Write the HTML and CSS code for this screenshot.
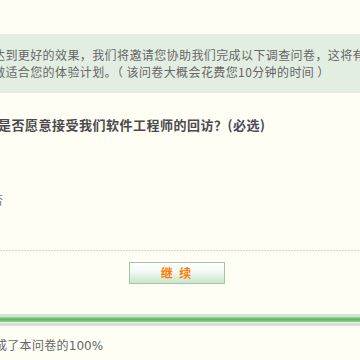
FILE: index.html
```html
<!DOCTYPE html>
<html lang="zh-CN">
<head>
  <meta charset="UTF-8">
  <title>调查问卷</title>
  <link rel="stylesheet" href="styles.css">
</head>
<body>

<div class="page">
  <div class="intro">
    <p class="intro-line">达到更好的效果，我们将邀请您协助我们完成以下调查问卷，这将有助于我们</p>
    <p class="intro-line">做适合您的体验计划。（ 该问卷大概会花费您10分钟的时间 ）</p>
  </div>

  <div class="question">
    <h3 class="question-title">是否愿意接受我们软件工程师的回访？<span class="required">(必选)</span></h3>
    <div class="options">
      <label class="option">否</label>
    </div>
  </div>

  <div class="actions">
    <button class="next-btn">继 续</button>
  </div>

  <div class="progress">
    <div class="progress-bar"><div class="progress-fill" style="width: 100%"></div></div>
    <p class="progress-text">成了本问卷的<span class="num">100%</span></p>
  </div>
</div>

</body>
</html>
```

FILE: styles.css
```css
body {
  margin: 0;
  padding: 0;
  background: #fefef5;
  color: #666;
  font-family: "Noto Sans CJK SC", "Noto Sans", sans-serif;
  font-size: 12px;
  overflow: hidden;
  width: 360px;
  height: 360px;
}
.page {
  padding-top: 34px;
}
.intro {
  background: #e3eee2;
  padding: 12px 0 13px;
  overflow: hidden;
}
.intro-line {
  margin: 0 0 0 -7px;
  line-height: 17px;
  white-space: pre;
  letter-spacing: 0.4px;
  color: #666;
}
.question {
  margin-top: 22px;
  overflow: hidden;
}
.question-title {
  margin: 0 0 0 -2px;
  font-size: 13px;
  line-height: 20px;
  font-weight: bold;
  color: #4a4a4a;
  letter-spacing: 0.5px;
  white-space: nowrap;
}
.required {
  color: #4a4a5a;
}
.options {
  padding-top: 55px;
  height: 59px;
}
.option {
  display: block;
  margin-left: -9px;
  line-height: 20px;
  color: #777;
}
.actions {
  border-top: 1px solid transparent;
  background: repeating-linear-gradient(to right, #ccd8cb 0 2px, transparent 2px 3px) top left / 100% 1px no-repeat;
  padding-top: 12px;
  display: flex;
  justify-content: center;
}
.next-btn {
  width: 96px;
  height: 22px;
  margin-right: 6px;
  border: 1px solid #9fc9a2;
  background: linear-gradient(to bottom, #ffffff 0%, #f4faf4 40%, #cde5cd 100%);
  color: #ff7b00;
  font-family: "Noto Sans CJK SC", sans-serif;
  font-size: 12px;
  font-weight: bold;
  letter-spacing: 2px;
  padding: 0;
  line-height: 20px;
  cursor: pointer;
}
.progress {
  margin-top: 30px;
}
.progress-bar {
  height: 12px;
  box-sizing: border-box;
  border-top: 3px solid #d9e0d7;
  border-bottom: 3px solid #d3dfd7;
  background: #f0f4ee;
}
.progress-fill {
  height: 5px;
  background: linear-gradient(to bottom, #9ad49a 0%, #5fbd5f 50%, #8ccf8c 100%);
}
.progress-text {
  margin: 9px 0 0 -5px;
  line-height: 20px;
  font-size: 12px;
  color: #666;
  letter-spacing: 0.3px;
  white-space: nowrap;
}
.num {
  font-family: "DejaVu Sans", sans-serif;
  letter-spacing: 0;
}
```
